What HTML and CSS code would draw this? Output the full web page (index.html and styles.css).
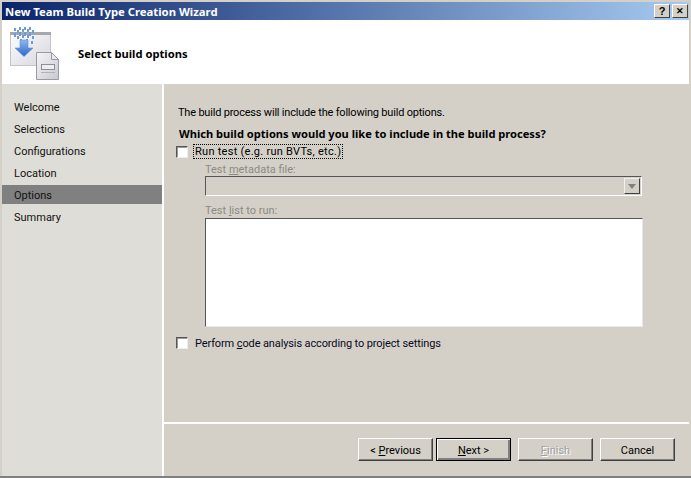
FILE: index.html
```html
<!DOCTYPE html>
<html lang="en">
<head>
<meta charset="utf-8">
<title>New Team Build Type Creation Wizard</title>
<link rel="stylesheet" href="styles.css">
</head>
<body>
<div class="window">
  <div class="titlebar">
    <span class="title">New Team Build Type Creation Wizard</span>
    <div class="capbtns"><span class="capbtn">?</span><span class="capbtn capx">✕</span></div>
  </div>
  <div class="header">
    <svg class="logo" width="60" height="62" viewBox="0 0 60 62">
      <defs>
        <linearGradient id="w" x1="0" y1="0" x2="1" y2="1"><stop offset="0" stop-color="#ffffff"/><stop offset="1" stop-color="#d4d4dc"/></linearGradient>
        <linearGradient id="d" x1="0" y1="0" x2="1" y2="1"><stop offset="0" stop-color="#f6f6f8"/><stop offset="1" stop-color="#c8c8d0"/></linearGradient>
        <linearGradient id="a" x1="0" y1="0" x2="0" y2="1"><stop offset="0" stop-color="#8fb8ee"/><stop offset="1" stop-color="#2a66c8"/></linearGradient>
      </defs>
      <rect x="10.500" y="12.500" width="40" height="33" fill="url(#w)" stroke="#c4c4ca"/>
      <rect x="10" y="12" width="41" height="3" fill="#a8a8ac"/>
      <g fill="#6f9ada">
        <rect x="14" y="8" width="2" height="3"/><rect x="19" y="7" width="2" height="3"/><rect x="24" y="7" width="2" height="3"/><rect x="29" y="7" width="2" height="3"/>
        <rect x="14" y="13" width="2" height="4"/><rect x="19" y="12" width="2" height="4"/><rect x="24" y="12" width="2" height="4"/><rect x="29" y="12" width="2" height="4"/>
        <rect x="17" y="10" width="2" height="3"/><rect x="22" y="9" width="2" height="3"/><rect x="27" y="9" width="2" height="3"/><rect x="32" y="10" width="2" height="3"/>
        <rect x="17" y="16" width="2" height="3"/><rect x="22" y="15" width="2" height="3"/><rect x="27" y="15" width="2" height="3"/><rect x="32" y="16" width="2" height="3"/>
        <rect x="20" y="19" width="2" height="3"/><rect x="26" y="19" width="2" height="3"/><rect x="31" y="21" width="2" height="3"/>
      </g>
      <path d="M20 20h8v8h5l-9 8.500-9-8.500h5z" fill="url(#a)" stroke="#5c8ed8" stroke-width=".6"/>
      <path d="M36.500 32.500h15l7 7v20h-22z" fill="url(#d)" stroke="#9a9aa4"/>
      <path d="M51.500 32.500v7h7z" fill="#e8e8ee" stroke="#9a9aa4"/>
      <rect x="41.500" y="44.500" width="13" height="5" fill="#eeeef2" stroke="#8e8e98"/>
      <path d="M41 52.500h14" stroke="#b0b0b8"/>
    </svg>
    <span class="heading">Select build options</span>
  </div>
  <div class="body">
    <nav class="side">
      <div class="step">Welcome</div>
      <div class="step">Selections</div>
      <div class="step">Configurations</div>
      <div class="step">Location</div>
      <div class="step current">Options</div>
      <div class="step">Summary</div>
    </nav>
    <main class="main">
      <div class="content">
        <p class="intro">The build process will include the following build options.</p>
        <p class="question">Which build options would you like to include in the build process?</p>
        <div class="check first"><span class="box"></span><span class="focus">Run test (e.g. run BVTs, etc.)</span></div>
        <div class="sub">
          <div class="dim lab1">Test <u>m</u>etadata file:</div>
          <div class="combo"><span class="arrowbtn"><span class="tri"></span></span></div>
          <div class="dim lab2">Test <u>l</u>ist to run:</div>
          <div class="list"></div>
        </div>
        <div class="check second"><span class="box"></span><span class="plain">Perform <u>c</u>ode analysis according to project settings</span></div>
      </div>
      <div class="footer">
        <button class="btn"><span>&lt; <u>P</u>revious</span></button>
        <button class="btn default"><span><u>N</u>ext &gt;</span></button>
        <button class="btn off"><span><u>F</u>inish</span></button>
        <button class="btn"><span>Cancel</span></button>
      </div>
    </main>
  </div>
</div>
</body>
</html>
```
FILE: styles.css
```css
* { box-sizing: border-box; }
html, body { margin: 0; padding: 0; }
body { width: 691px; height: 478px; overflow: hidden; background: #d4d0c8; font-family: Roboto, "Liberation Sans", sans-serif; font-size: 11px; color: #000; }
.window { width: 691px; height: 478px; display: flex; flex-direction: column; padding: 0 2px 0 2px; border-bottom: 2px solid #808080; }
.titlebar { height: 20px; flex: none; display: flex; align-items: center; justify-content: space-between; background: linear-gradient(90deg, #0a246a 0%, #a6caf0 100%); padding: 0 1px 0 3px; border-top: 2px solid #d4d0c8; }
.title { color: #fff; font: 700 11.3px "Noto Sans", sans-serif; }
.capbtns { display: flex; gap: 2px; }
.capbtn { width: 16px; height: 14px; background: #d4d0c8; border: 1px solid; border-color: #fff #404040 #404040 #fff; display: flex; align-items: center; justify-content: center; font: 700 11px/1 "Liberation Sans", sans-serif; }
.capx { font-size: 9px; }
.header { height: 64px; flex: none; background: #fff; display: flex; align-items: center; position: relative; }
.logo { position: absolute; left: -2px; top: 0; }
.heading { margin: 2px 0 0 76px; font: 700 11.2px "Noto Sans", sans-serif; }
.body { flex: 1; display: flex; min-height: 0; }
.side { width: 160px; flex: none; background: #dfddd7; padding-top: 12px; }
.step { height: 22px; line-height: 22px; padding: 1px 0 0 12px; color: #111; }
.current { background: #808080; height: 19px; line-height: 19px; margin: 1px 0 2px; }
.main { flex: 1; border-left: 2px solid #fff; display: flex; flex-direction: column; }
.content { flex: 1; padding: 20px 0 0 12px; }
.intro { margin: 0; height: 15px; line-height: 15px; padding: 1px 0 0 2px; letter-spacing: -0.2px; }
.question { margin: 7px 0 0; height: 15px; font: 700 11.1px/15px "Noto Sans", sans-serif; padding-left: 3px; }
.check { display: flex; align-items: center; height: 15px; }
.first { margin-top: 3px; }
.second { margin-top: 8px; }
.box { width: 12px; height: 12px; flex: none; background: #fff; border: 1px solid; border-color: #555 #eee #eee #555; box-shadow: inset 1px 1px 0 #999; }
.focus { margin-left: 6px; padding: 0 1px; outline: 1px dotted #000; line-height: 13px; letter-spacing: 0.27px; }
.plain { margin-left: 7px; padding-top: 2px; line-height: 15px; color: #0a0a20; letter-spacing: -0.12px; }
.sub { padding-left: 29px; }
.dim { color: #8c8a84; height: 15px; line-height: 15px; padding-top: 1px; }
.lab1 { margin-top: 2px; }
.lab2 { margin-top: 6px; }
.combo { width: 437px; height: 20px; border: 1px solid; border-color: #555 #fff #fff #555; display: flex; justify-content: flex-end; padding: 1px 1px 1px 0; }
.arrowbtn { width: 16px; height: 16px; background: #d4d0c8; border: 1px solid; border-color: #f0f0f0 #404040 #404040 #f0f0f0; display: flex; align-items: center; justify-content: center; }
.tri { width: 0; height: 0; border: 4px solid transparent; border-top: 5px solid #808080; border-bottom: 0; }
.list { width: 438px; height: 109px; margin-top: 1px; background: #fff; border: 1px solid; border-color: #555 #e8e8e8 #e8e8e8 #555; }
.footer { height: 54px; flex: none; border-top: 2px solid #fff; display: flex; justify-content: flex-end; gap: 3px; padding: 14px 14px 0 0; }
.btn { width: 75px; height: 23px; padding: 2px 0 0; background: #d4d0c8; border: 1px solid; border-color: #fff #404040 #404040 #fff; font: inherit; color: #000; box-shadow: inset -1px -1px 0 #808080; }
.default { border-color: #000; box-shadow: inset 1px 1px 0 #fff, inset -2px -2px 0 #808080; }
.off { margin-left: 4px; margin-right: 4px; color: #a0a0a0; text-shadow: 1px 1px 0 #fff; }
```
